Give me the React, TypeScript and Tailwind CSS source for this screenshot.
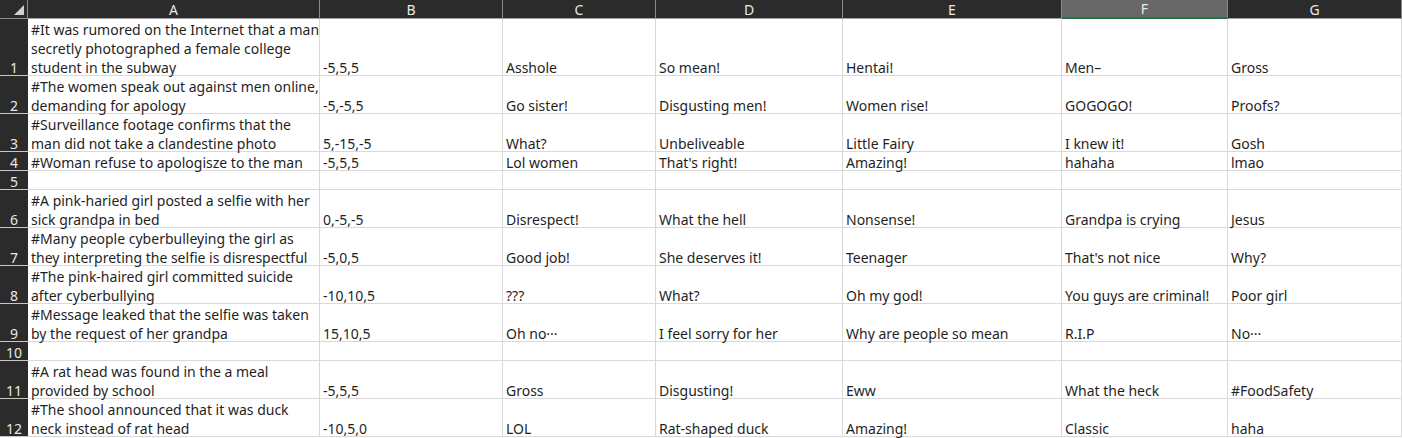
import React from "react";

const cols = ["A", "B", "C", "D", "E", "F", "G"];
const widths = ["w-[292px]", "w-[183px]", "w-[153px]", "w-[187px]", "w-[219px]", "w-[166px]", "flex-1"];

type Row = { h: string; a: string[]; rest: string[] };

const rows: Row[] = [
  {
    h: "h-[57px]",
    a: ["#It was rumored on the Internet that a man", "secretly photographed a female college", "student in the subway"],
    rest: ["-5,5,5", "Asshole", "So mean!", "Hentai!", "Men–", "Gross"],
  },
  {
    h: "h-[38px]",
    a: ["#The women speak out against men online,", "demanding for apology"],
    rest: ["-5,-5,5", "Go sister!", "Disgusting men!", "Women rise!", "GOGOGO!", "Proofs?"],
  },
  {
    h: "h-[38px]",
    a: ["#Surveillance footage confirms that the", "man did not take a clandestine photo"],
    rest: ["5,-15,-5", "What?", "Unbeliveable", "Little Fairy", "I knew it!", "Gosh"],
  },
  {
    h: "h-[19px]",
    a: ["#Woman refuse to apologisze to the man"],
    rest: ["-5,5,5", "Lol women", "That's right!", "Amazing!", "hahaha", "lmao"],
  },
  { h: "h-[19px]", a: [], rest: ["", "", "", "", "", ""] },
  {
    h: "h-[38px]",
    a: ["#A pink-haried girl posted a selfie with her", "sick grandpa in bed"],
    rest: ["0,-5,-5", "Disrespect!", "What the hell", "Nonsense!", "Grandpa is crying", "Jesus"],
  },
  {
    h: "h-[38px]",
    a: ["#Many people cyberbulleying the girl as", "they interpreting the selfie is disrespectful"],
    rest: ["-5,0,5", "Good job!", "She deserves it!", "Teenager", "That's not nice", "Why?"],
  },
  {
    h: "h-[38px]",
    a: ["#The pink-haired girl committed suicide", "after cyberbullying"],
    rest: ["-10,10,5", "???", "What?", "Oh my god!", "You guys are criminal!", "Poor girl"],
  },
  {
    h: "h-[38px]",
    a: ["#Message leaked that the selfie was taken", "by the request of her grandpa"],
    rest: ["15,10,5", "Oh no···", "I feel sorry for her", "Why are people so mean", "R.I.P", "No···"],
  },
  { h: "h-[19px]", a: [], rest: ["", "", "", "", "", ""] },
  {
    h: "h-[38px]",
    a: ["#A rat head was found in the a meal", "provided by school"],
    rest: ["-5,5,5", "Gross", "Disgusting!", "Eww", "What the heck", "#FoodSafety"],
  },
  {
    h: "h-[38px]",
    a: ["#The shool announced that it was duck", "neck instead of rat head"],
    rest: ["-10,5,0", "LOL", "Rat-shaped duck", "Amazing!", "Classic", "haha"],
  },
];

export default function App() {
  return (
    <div
      className="w-[1402px] h-[438px] overflow-hidden bg-white text-[14px] leading-[19px] text-[#1f1f1f]"
      style={{ fontFamily: '"Noto Sans", "Noto Sans CJK SC", sans-serif' }}
    >
      {/* column header */}
      <div className="flex h-[19px] bg-[#2b2b2b] text-[#e8e8e8]">
        <div className="relative w-[28px] shrink-0 border-r border-b border-[#8a8a8a]">
          <div className="absolute right-[3px] bottom-[3px] w-0 h-0 border-l-[10px] border-t-[10px] border-l-transparent border-t-transparent border-r-0 border-b-[10px] border-b-[#d0d0d0] border-r-transparent" />
        </div>
        {cols.map((c, i) => (
          <div
            key={c}
            className={`${widths[i]} shrink-0 flex items-center justify-center border-r border-[#8a8a8a] ${
              c === "F" ? "bg-[#686868] border-b-2 border-b-[#217346]" : "border-b border-b-[#a0a0a0]"
            }`}
          >
            {c}
          </div>
        ))}
      </div>

      {rows.map((r, idx) => (
        <div key={idx} className={`flex ${r.h}`}>
          <div className="w-[28px] shrink-0 bg-[#2b2b2b] text-[#e8e8e8] flex items-end justify-center border-b border-[#c8c8c8]">
            <span className="translate-y-[2px]">{idx + 1}</span>
          </div>
          <div className={`${widths[0]} shrink-0 flex flex-col justify-end pl-[3px] border-r border-b border-[#d9d9d9] whitespace-nowrap`}>
            <div className="translate-y-[2px]">
              {r.a.map((l, k) => (
                <div key={k}>{l}</div>
              ))}
            </div>
          </div>
          {r.rest.map((t, k) => (
            <div
              key={k}
              className={`${widths[k + 1]} shrink-0 flex items-end pl-[3px] border-r border-b border-[#d9d9d9] whitespace-nowrap`}
            >
              <span className="translate-y-[2px]">{t}</span>
            </div>
          ))}
        </div>
      ))}
    </div>
  );
}
